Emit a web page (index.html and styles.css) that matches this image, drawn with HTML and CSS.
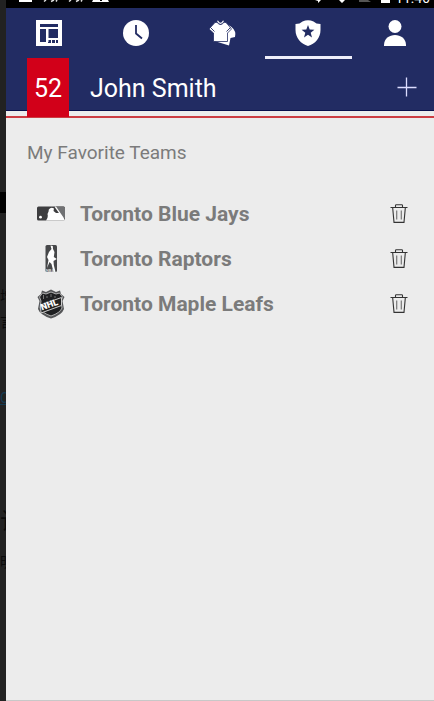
FILE: index.html
```
<!DOCTYPE html>
<html lang="en">
<head>
<meta charset="utf-8">
<meta name="viewport" content="width=device-width, initial-scale=1">
<title>My Favorite Teams</title>
<link rel="stylesheet" href="styles.css">
</head>
<body>
<svg class="defs" aria-hidden="true">
  <symbol id="trash" viewBox="0 0 18 20">
    <path d="M0.5 3.5H17.5M5.5 3V1.5Q5.5 .7 6.3 .7H11.7Q12.5 .7 12.5 1.5V3M2.7 4L4 18.4H14L15.3 4" fill="none" stroke="#333" stroke-width="1.1"/>
    <path d="M6.7 6.5V15.5M11.3 6.5V15.5" fill="none" stroke="#777" stroke-width="1.2"/>
  </symbol>
</svg>
<div class="behind" aria-hidden="true">
  <span class="ghost g1">增</span>
  <span class="ghost g2">言</span>
  <span class="ghost g3">C</span>
  <span class="ghost g4">访</span>
  <span class="ghost g5">明</span>
</div>
<div class="app">
  <div class="status">
    <svg class="status-left" viewBox="0 0 92 8" aria-hidden="true">
      <path d="M1 0H14V2H1zM75 0H90L91 2H74z" fill="#fff"/>
      <path d="M26 1.500L28 0M33 1.500L36 0M38 1.500L39 0M51 1.500L53 0M58 1.500L61 0M63 1.500L64 0" stroke="#ddd" stroke-width="1.5" fill="none"/>
      <path d="M82 0h2v1h-2z" fill="#000"/>
    </svg>
    <svg class="status-right" viewBox="0 0 78 8" aria-hidden="true">
      <path d="M8 0H14L11 3V1zM32 0H38L35 3z" fill="#fff"/>
      <path d="M52 0H61L64 2H52z" fill="#555"/>
      <path d="M74 0H83V3H74z" fill="#fff"/>
    </svg>
    <span class="time">11:46</span>
  </div>
  <header class="top">
    <nav class="tabs">
      <button class="tab" aria-label="News"><svg viewBox="0 0 26 26"><path d="M0 0H26V26H0z" fill="#fff"/><path d="M4 4H22V7H4zM4 9H10V22H4zM12 9H22V18H12zM12 20H15V23H12zM16 20H19V23H16zM20 20H22V23H20z" fill="#222c63"/><path d="M11.500 9V22" stroke="#fff" stroke-width="2"/></svg></button>
      <button class="tab" aria-label="Scores"><svg viewBox="0 0 26 26"><circle cx="13" cy="13" r="13" fill="#fff"/><path d="M13 5V13.500L19 18.500" fill="none" stroke="#222c63" stroke-width="1.8"/></svg></button>
      <button class="tab" aria-label="Teams"><svg viewBox="0 0 26 26"><path d="M7 21.500L20 25.500L21.500 18L26 17Q27.500 11 22.500 7L18 4z" fill="#fff"/><path d="M6 2.500L9 2Q11.500 6.500 14 2L17 2.500L22.500 9L18.500 13V21.500H4.500V13L0 9z" fill="#fff" stroke="#222c63" stroke-width=".8"/><path d="M7 1Q11.500 8 16 1" fill="none" stroke="#222c63" stroke-width="1"/><path d="M8.500 .8Q11.500 6 14.500 .8" fill="none" stroke="#fff" stroke-width="1.200"/><path d="M1.500 7.500L5.500 11.500M21.500 7.500L17.500 11.500" fill="none" stroke="#222c63" stroke-width=".9"/></svg></button>
      <button class="tab active" aria-label="Favorites" aria-current="page"><svg viewBox="0 0 26 26"><path d="M7.500 1.500Q13-1 18.500 1.500Q21 4 25.500 4V10C25.500 18 20 24 13 26C6 24 .5 18 .5 10V4Q5 4 7.500 1.500z" fill="#fff"/><path d="M13 5L14.700 9.600L19.400 9.800L15.700 12.800L17 17.500L13 14.800L9 17.500L10.300 12.800L6.600 9.800L11.300 9.600z" fill="#222c63"/></svg></button>
      <button class="tab" aria-label="Profile"><svg viewBox="0 0 26 26"><circle cx="13" cy="6.500" r="6.500" fill="#fff"/><path d="M2 26V25C2 11.500 24 11.500 24 25V26z" fill="#fff"/></svg></button>
    </nav>
    <div class="profile">
      <span class="badge">52</span>
      <h1>John Smith</h1>
      <button class="add" aria-label="Add team"><svg viewBox="0 0 20 20"><path d="M.5 10.500H19.500M9.500 .5V19.500" stroke="#dcdcff" stroke-width="1.300"/></svg></button>
    </div>
  </header>
  <main>
    <h2>My Favorite Teams</h2>
    <ul class="teams">
      <li>
        <svg class="logo" viewBox="0 0 30 30" aria-hidden="true">
          <rect x="1" y="7.500" width="28" height="14" rx="1.500" fill="#3d3d3f"/>
          <path d="M18 7.500H27.500Q29 7.500 29 9V20L26 18z" fill="#707173"/>
          <path d="M10 21.500Q12.500 18 11.500 15Q13 12 12.800 10.500Q15 7.500 18 9.500L17.500 12L20 14L23 14L18.500 7.500H20L27.500 18.500L29 21.500z" fill="#fff"/>
          <circle cx="4.500" cy="18.200" r="1.400" fill="#fff"/>
        </svg>
        <span class="name">Toronto Blue Jays</span>
        <button class="remove" aria-label="Remove Toronto Blue Jays"><svg><use href="#trash"/></svg></button>
      </li>
      <li>
        <svg class="logo" viewBox="0 0 30 30" aria-hidden="true">
          <rect x="9.500" y="1" width="11.500" height="27" rx="1.500" fill="#47484a"/>
          <path d="M14.500 1.500L16.800 2L17 5L18.500 8L17.800 13L20.800 15L17.500 17L17.800 21L19.500 28H17.500L15.500 20L13.500 18L11 24L12.500 16L11 13L13 8L15.500 5z" fill="#fff"/>
          <text x="10" y="27.500" class="nba">NBA</text>
        </svg>
        <span class="name">Toronto Raptors</span>
        <button class="remove" aria-label="Remove Toronto Raptors"><svg><use href="#trash"/></svg></button>
      </li>
      <li>
        <svg class="logo" viewBox="0 0 30 30" aria-hidden="true">
          <path d="M6 1.500L10 3L15 .5L20 3L24 1.500L25 5L28.500 8L26.500 12L28 20Q26 26 15 29.500Q4 26 2 20L3.500 12L1.500 8L5 5z" fill="#555658"/>
          <path d="M6.500 4L10 5L15 3L20 5L23.500 4L26.500 8L25 12L26 19Q24 24 15 27Q6 24 4 19L5 12L3.500 8z" fill="#1f2022" stroke="#b0b0b0"/>
          <path d="M7.500 6V10M11 7V9M15 5V8M19 7V9" stroke="#777"/>
          <path d="M4.500 16L25.500 8.500V16.500L5 24z" fill="#222" stroke="#ccc"/>
          <text x="6" y="21.500" class="nhl" transform="rotate(-20 6 21.500)">NHL</text>
        </svg>
        <span class="name">Toronto Maple Leafs</span>
        <button class="remove" aria-label="Remove Toronto Maple Leafs"><svg><use href="#trash"/></svg></button>
      </li>
    </ul>
  </main>
</div>
</body>
</html>
```
FILE: styles.css
```
* { box-sizing: border-box; }

body {
  margin: 0;
  padding-left: 6px;
  background: linear-gradient(#222 0 192px, #000 192px 213px, #222 213px);
  font-family: Roboto, "Noto Sans CJK SC", sans-serif;
  overflow: hidden;
}

button {
  border: 0;
  padding: 0;
  background: none;
  cursor: pointer;
}

svg { display: block; overflow: visible; }

.defs { position: absolute; width: 0; height: 0; }

/* dimmed page that shows past the left edge of the app */
.behind {
  position: absolute;
  inset: 0 auto 0 0;
  width: 6px;
  overflow: hidden;
}

.ghost {
  position: absolute;
  left: 0;
  color: #0a0a0a;
  font-size: 14px;
  line-height: 20px;
}

.g1 { top: 286px; }
.g2 { top: 312px; }
.g3 { top: 388px; color: #123a52; text-decoration: underline; }
.g4 { top: 512px; font-size: 24px; }
.g5 { top: 552px; }

.app {
  position: relative;
  display: flex;
  flex-direction: column;
  min-height: 100vh;
  margin-right: -4px;
  background: #ececec;
  border-bottom: 1px solid #c8c8c8;
}

.status {
  display: flex;
  align-items: flex-end;
  height: 8px;
  padding: 0 8px 0 12px;
  background: #000;
  overflow: hidden;
}

.status-left { width: 92px; height: 8px; }
.status-right { width: 78px; height: 8px; margin-left: auto; }

.time {
  margin-left: 10px;
  color: #fff;
  font-size: 14px;
  line-height: 20px;
}

.top {
  background: #222c63;
  border-bottom: 1px solid #080f4c;
}

.tabs { display: flex; }

.tab {
  flex: 1;
  display: flex;
  justify-content: center;
  height: 51px;
  padding-top: 12px;
  border-bottom: 3px solid transparent;
}

.tab svg { width: 26px; height: 26px; }
.tab.active { border-color: #eeeefa; }

.profile {
  display: flex;
  align-items: center;
  height: 51px;
  padding: 0 21px;
}

.badge {
  align-self: flex-start;
  width: 42px;
  height: 59px;
  margin-top: -1px;
  background: #d20019;
  color: #fff;
  font-size: 25px;
  line-height: 62px;
  text-align: center;
  z-index: 1;
}

h1 {
  flex: 1;
  margin: 8px 0 0 21px;
  color: #fff;
  font-size: 25px;
  font-weight: 400;
  line-height: 32px;
}

.add { margin-top: 4px; }
.add svg { width: 20px; height: 20px; }

main {
  margin-top: 5px;
  padding: 20px 30px 20px 21px;
  border-top: 2px solid #cc3d43;
}

h2 {
  margin: 0;
  color: #7b7b7b;
  font-size: 19px;
  font-weight: 400;
  line-height: 30px;
}

.teams {
  margin: 23px 0 0;
  padding: 0 0 0 9px;
  list-style: none;
}

.teams li {
  display: flex;
  align-items: center;
  height: 45px;
}

.logo { width: 30px; height: 30px; }

.name {
  flex: 1;
  margin-left: 14px;
  color: #7b7b7b;
  font-size: 21px;
  font-weight: 700;
  line-height: 28px;
}

.remove svg { width: 18px; height: 20px; }

.nba { font-size: 4px; font-weight: 700; fill: #ddd; }
.nhl { font-size: 9px; font-weight: 900; fill: #fff; }
```
